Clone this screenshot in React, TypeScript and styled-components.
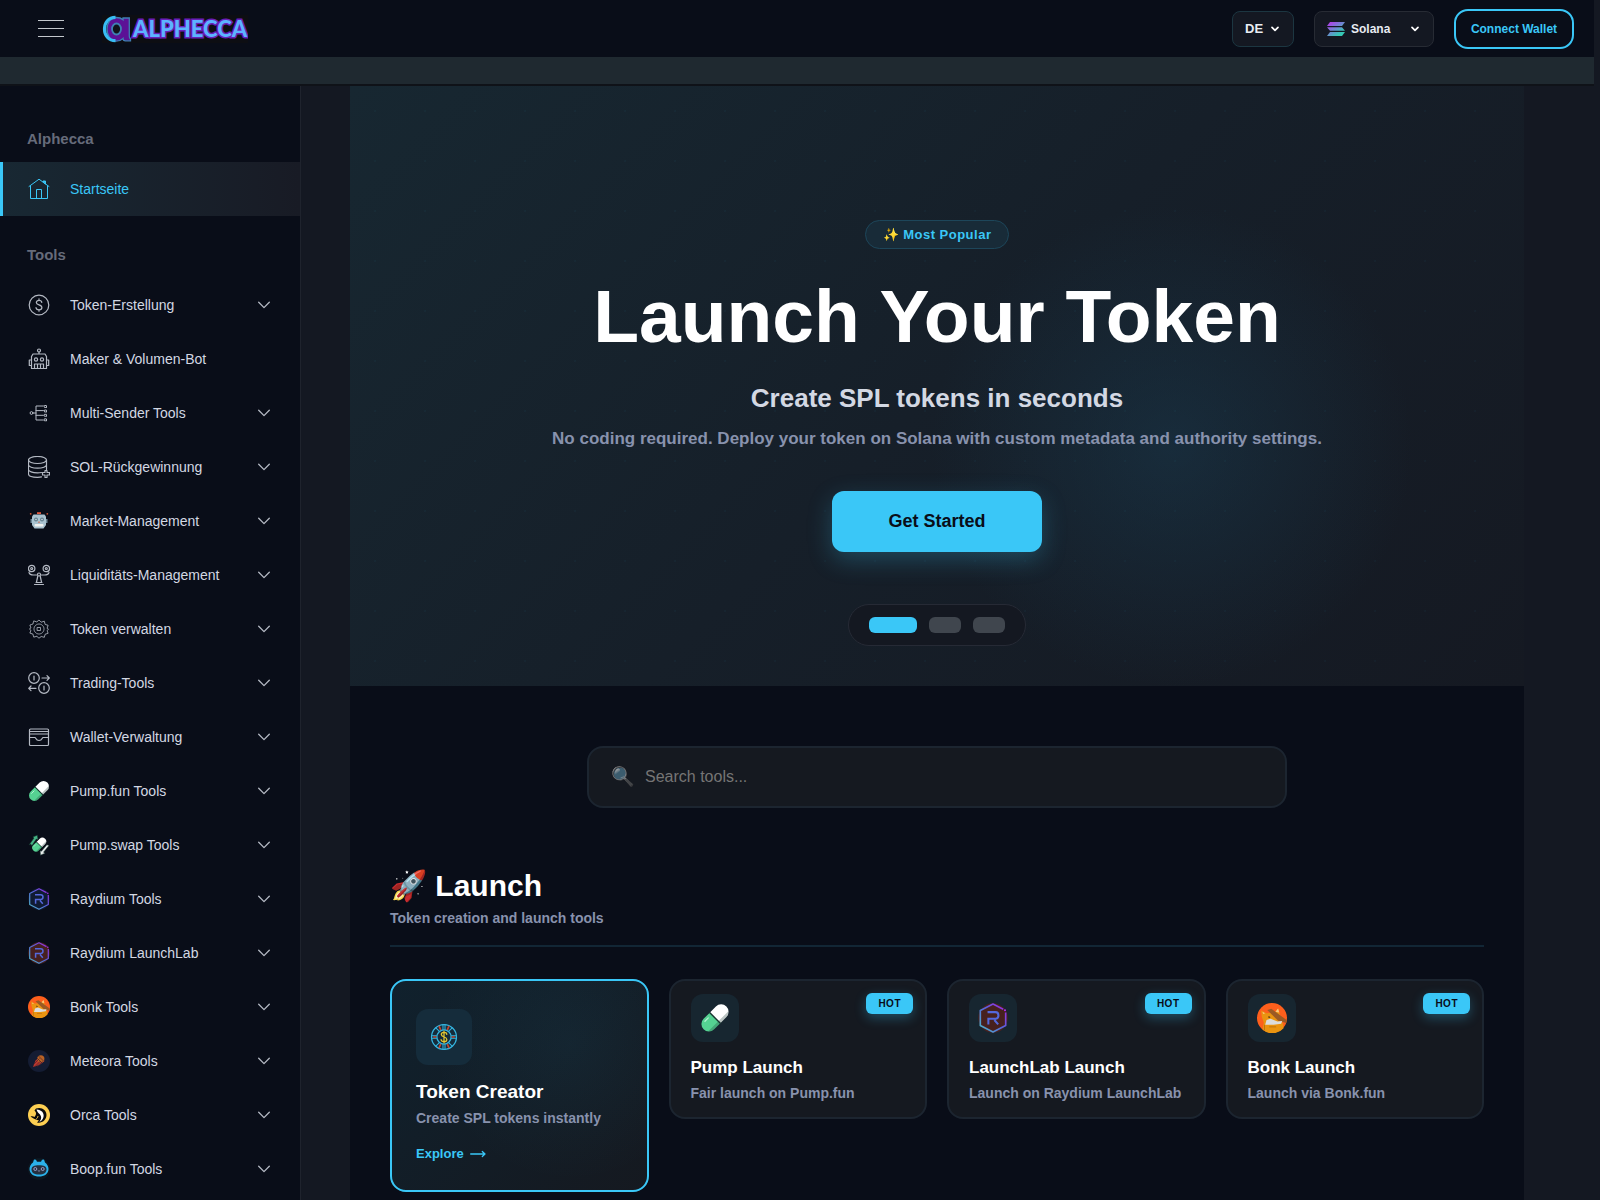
import React, { useId, useState } from "react";
import styled, { createGlobalStyle, css } from "styled-components";

const color = {
  accent: "#3ac7f7",
  ink: "#090d18",
  panel: "#141822",
  card: "#151920",
  line: "#1c2530",
  text: "#d3d8e3",
  muted: "#8892ad",
};

const GlobalStyle = createGlobalStyle`
  *, *::before, *::after { box-sizing: border-box; }
  body {
    margin: 0;
    background: ${color.panel};
    color: #fff;
    font-family: Arial, "Liberation Sans", sans-serif;
  }
  h1, h2, h3, p, ul { margin: 0; padding: 0; }
  ul { list-style: none; }
  button, input, select { font-family: inherit; }
`;

/* ---------- icons ---------- */

const LineSvg = styled.svg<{ $weight?: number }>`
  display: block;
  flex: none;
  fill: none;
  stroke: currentColor;
  stroke-width: ${(p) => p.$weight ?? 1.2};
  stroke-linecap: round;
  stroke-linejoin: round;
`;

const ArtSvg = styled.svg`
  display: block;
  flex: none;
`;

type IconProps = { size?: number };

const Line = ({ size = 22, weight, children }: IconProps & { weight?: number; children: React.ReactNode }) => (
  <LineSvg $weight={weight} width={size} height={size} viewBox="0 0 22 22" aria-hidden="true">
    {children}
  </LineSvg>
);

const Art = ({ size = 22, children }: IconProps & { children: React.ReactNode }) => (
  <ArtSvg width={size} height={size} viewBox="0 0 22 22" aria-hidden="true">
    {children}
  </ArtSvg>
);

const HomeIcon = () => (
  <Line weight={1}>
    <path d="M1 8.500 11 1.200l10 7.300M2.500 8v12.500h17V8M8.500 20.500v-9h5v9" />
    <path d="M15 3.800V3h2.500v2.700z" fill="currentColor" />
  </Line>
);

const DollarIcon = () => (
  <Line>
    <circle cx="11" cy="11" r="9.800" />
    <path d="M13.800 8.300c-.2-1.400-1.300-2-2.800-2s-2.700.8-2.700 2.200c0 3.200 5.600 1.600 5.600 5 0 1.500-1.200 2.300-2.900 2.300s-2.900-.8-3-2.300M11 4.800v1.500M11 15.800v1.400" />
  </Line>
);

const BotIcon = () => (
  <Line>
    <circle cx="11" cy="2.500" r="1.500" />
    <path d="M11 4v1.500M5 6h12l1.500 2.500v12h-15v-12zM3.500 12H1.300v5.500h2.200M18.500 12h2.200v5.500h-2.200M6.500 20.500V16h9v4.500M9.500 16v4.500M12.500 16v4.500" />
    <circle cx="8" cy="11.500" r="1.600" />
    <circle cx="14" cy="11.500" r="1.600" />
  </Line>
);

const MultiSendIcon = () => (
  <Line weight={1}>
    <circle cx="3.500" cy="11" r="1.400" />
    <path d="M5 11h3M15.500 4H8v14h7.500M8 8.600h7.500M8 13.300h7.500" />
    <path
      d="M16.500 3.500h2v2h-2zM16.500 8h2v2h-2zM16.500 12.300h2v2h-2zM16.500 16.800h2v2h-2z"
      strokeDasharray="1.500 1"
    />
  </Line>
);

const DatabaseIcon = () => (
  <Line>
    <ellipse cx="9.500" cy="4" rx="9" ry="3.500" />
    <path d="M.5 4v14c0 2 4 3.300 9 3.300 1.500 0 3-.1 4-.4M18.500 4v9.500M.5 8.700c0 2 4 3.500 9 3.500s9-1.500 9-3.500M.5 13.400c0 2 4 3.500 9 3.500 1.500 0 2.600-.1 4-.4" />
    <path d="M17 14.500h2v2h2.500v2.500H19v2.500h-2V19h-2.500v-2.500H17z" />
  </Line>
);

const RobotIcon = () => (
  <Art>
    <path d="M9 4V2.200h4V4z" fill="#e0563b" />
    <circle cx="2.700" cy="3.800" r=".9" fill="#c9522f" />
    <circle cx="19.300" cy="3.800" r=".9" fill="#c9522f" />
    <path d="M2.500 9h2v4h-2zM17.500 9h2v4h-2z" fill="#6d8796" />
    <path d="M5.500 4.500h11L18 6.500V15l-2.500 3.500h-9L4 15V6.500z" fill="#a9c2cf" />
    <circle cx="8" cy="9.500" r="2" fill="#617f8e" />
    <circle cx="14" cy="9.500" r="2" fill="#617f8e" />
    <circle cx="8" cy="9.500" r=".8" fill="#d4dde2" />
    <circle cx="14" cy="9.500" r=".8" fill="#d4dde2" />
    <path d="M10.500 11.500h1l.5 1.200h-2z" fill="#d06a52" />
    <rect x="6.500" y="14" width="9" height="2.500" rx="1" fill="#f1f1ef" />
  </Art>
);

const ScaleIcon = () => (
  <Line>
    <circle cx="3.700" cy="4.500" r="3.200" />
    <circle cx="18.300" cy="4.500" r="3.200" />
    <circle cx="3.700" cy="4.500" r="1" />
    <circle cx="18.300" cy="4.500" r="1" />
    <path d="M1 8.500c.5 1.800 2.500 2.500 4.500 2.500h3M21 8.500c-.5 1.800-2.500 2.500-4.500 2.500h-3M9.800 12 8.500 18M12.200 12l1.300 6M8 18.500h6M6.500 20.500h9" />
    <circle cx="11" cy="10.500" r="1.500" />
  </Line>
);

const GearIcon = () => (
  <Line weight={0.8}>
    <path
      d="m11 2 2.200 2.200 3.100-1 .8 3.200 3 .9-1 3 1.400 1-1.400 1.200 1 2.800-3 1-.8 3-3.100-.8L11 20.200l-2.200-1.900-3.100.8-.8-3-3-1 1-2.800L1.500 11l1.400-1-1-3 3-.9.8-3.200 3.100 1z"
      strokeDasharray="1.500 .6"
    />
    <circle cx="11" cy="11" r="5" strokeDasharray="1 .8" />
    <path d="M9.500 9.500h3v3h-3z" />
  </Line>
);

const SwapIcon = () => (
  <Line>
    <circle cx="6" cy="6" r="5.300" />
    <circle cx="16" cy="16" r="5.300" />
    <path d="M6 4v4M16 14v4M14 6h7.300M19 3.700 21.300 6 19 8.300M8 16.300H.7M3 14 .7 16.300 3 18.600" />
  </Line>
);

const WalletIcon = () => (
  <Line>
    <rect x="1.500" y="3" width="19" height="16.500" rx="1" />
    <path d="M1.500 5.500h19M1.500 8h19M1.500 11.500H7c.8 0 .8 3 4 3s3.200-3 4-3h5.500" />
  </Line>
);

const Capsule = () => (
  <g transform="rotate(45 11 11) translate(-1.800 -1.800) scale(1.160)">
    <path d="M6.300 11V5.500a4.700 4.700 0 0 1 9.400 0V11z" fill="#fff" />
    <path d="M6.300 11v5.500a4.700 4.700 0 0 0 9.400 0V11z" fill="#55d292" />
    <path d="M14 1.800c1.200 1 1.700 2.200 1.700 3.700V11H14zM14 11h1.700v5.500c0 1.500-.5 2.700-1.700 3.700z" fill="#1d4038" opacity=".3" />
    <path d="M6 11h10" stroke="#17352f" strokeWidth=".9" />
    <path d="M8 14v3" stroke="#b5f0d2" strokeWidth=".8" strokeLinecap="round" />
  </g>
);

const PillIcon = ({ size }: IconProps) => (
  <Art size={size}>
    <Capsule />
  </Art>
);

const PillSwapIcon = () => (
  <Art>
    <g transform="translate(3.500 3) scale(.7)">
      <Capsule />
    </g>
    <path d="M1 11 6 4 4.800 3l4.500-1.800.7 4.300L8.300 5 4 11.500 2.500 10z" fill="#44b383" stroke="#17352f" strokeWidth=".5" />
    <path d="m21 11.500-5.500 6.700 1.500 1-4.500 2-.4-4.400 1.300.5 5.500-6.500z" fill="#e8ecec" stroke="#17352f" strokeWidth=".5" />
  </Art>
);

const RaydiumIcon = ({ size, warm }: IconProps & { warm?: boolean }) => {
  const id = useId();
  return (
    <Art size={size}>
      <defs>
        <linearGradient id={id} x1="0" y1="1" x2="1" y2="0">
          <stop offset="0" stopColor="#4fb9c4" />
          <stop offset=".5" stopColor="#5468dc" />
          <stop offset="1" stopColor="#a31fe0" />
        </linearGradient>
      </defs>
      <circle cx="11" cy="11" r="10.800" fill={warm ? "#47201f" : "#101b33"} />
      <path
        d="M20.300 7v9.500L11 21.300 1.700 16.500v-11L11 .8l7.500 3.800"
        fill="none"
        stroke={`url(#${id})`}
        strokeWidth="1.200"
        strokeLinejoin="round"
      />
      <circle cx="19.800" cy="5.300" r=".8" fill="#b027ee" />
      <path
        d="M7 6.700h5.800c2.900 0 2.900 4.800 0 4.800H7.600v4.200M12 12.500l2.800 3.200"
        fill="none"
        stroke="#5468dc"
        strokeWidth="1.500"
      />
    </Art>
  );
};

const BonkIcon = ({ size }: IconProps) => (
  <Art size={size}>
    <circle cx="11" cy="11" r="11" fill="#fd5f1c" />
    <path d="M3.500 10 3 5.500l4 2 6-.5 2.500-3 1.300 4.500.7 4.500 1.500 2 .5 3.500A11 11 0 0 1 4 19.500l1-5z" fill="#ea9410" />
    <path d="m13.500 6.500 2-2.500.8 3zM4.500 8 4 6.500l2 1z" fill="#f9c982" />
    <path d="m7.500 5.200 3-1 11.200 8.300-.2 2.200-6-1.700z" fill="#9b5a24" />
    <path d="M7 12.500 10 11.500l5 2 3.500-.3-.8 2-5.500.8H6z" fill="#dcdcdc" />
    <path d="M8.500 9.500v1.500l1.500-.5z" fill="#3c2412" />
    <path d="M5.500 16v4M9 17.500h5" stroke="#b96a0b" strokeWidth=".6" />
  </Art>
);

const MeteoraIcon = () => (
  <Art>
    <circle cx="11" cy="11" r="11" fill="#141c33" />
    <path d="m5 17 2.500-6.500L13 6l3.500 5-5 4z" fill="#b8362e" />
    <circle cx="12.800" cy="8.800" r="3.600" fill="#b96224" />
    <path d="m5.500 14.500 6-6M6.500 17l6-6M9 16.500l5.500-5M10.500 6l5 5M9 8l5 5" stroke="#4e2228" strokeWidth=".7" />
  </Art>
);

const OrcaIcon = () => (
  <Art>
    <circle cx="11" cy="11" r="11" fill="#fdcf52" />
    <path d="M8 4.500c5.500-2 10.500 1.500 10.500 6.500s-4.500 8.500-9.500 7.500l2-2C7.500 15.500 4 14 2.500 12.500c1.500-.5 3-.3 4 .4C8 11 9 9 6.500 6.500z" fill="#0b0b0c" />
    <path d="M8.500 5.500c5 .3 8 3.500 7 7.500-.6 2.500-2.500 4.300-4.300 4.700C14 15 13.500 12 11.500 10 10 8.500 9 7.500 8.500 5.500z" fill="#fff" />
    <path d="M10 12c-.4 1.500-.6 2.300-1.800 3" fill="none" stroke="#fdcf52" strokeWidth=".9" />
  </Art>
);

const BoopIcon = () => (
  <Art>
    <circle cx="11" cy="11" r="11" fill="#0c1720" />
    <path d="M5 4.500 6 1.500l2 .3 1 2h4l1-2 2-.3 1 3c2.200 1.500 3.500 4 3.500 6.500 0 5-4.500 7.500-9.500 7.500S1.500 16 1.500 11c0-2.500 1.300-5 3.500-6.500z" fill="#2bb2ea" />
    <path d="M11 7.300c5 0 7.500 1.200 7.500 4.200S16 16.500 11 16.500s-7.500-2-7.500-5 2.500-4.200 7.500-4.200z" fill="#25313f" />
    <circle cx="7.300" cy="11" r="1.500" fill="none" stroke="#a5a8d6" strokeWidth=".9" />
    <circle cx="14.700" cy="11" r="1.500" fill="none" stroke="#a5a8d6" strokeWidth=".9" />
    <path d="M9.800 12.500c.8.700 1.600.7 2.400 0" fill="none" stroke="#a5a8d6" strokeWidth=".8" />
  </Art>
);

const ChipIcon = ({ size }: IconProps) => (
  <Line size={size} weight={1}>
    <g stroke="#35b5e0">
      <circle cx="11" cy="11" r="9.800" />
      <circle cx="11" cy="11" r="5.600" />
      <path
        d="M10.200 1.300v3.800M11.800 1.300v3.800M10.200 16.900v3.800M11.800 16.900v3.800M1.300 10h3.800M1.300 12h3.800M16.900 10h3.800M16.900 12h3.800M4.600 3.800l2.600 2.600M17.400 3.800l-2.600 2.600M4.600 18.200l2.600-2.600M17.400 18.200l-2.600-2.600"
        strokeWidth=".8"
      />
    </g>
    <path
      d="M7.300 2.800 8.200 5M14.700 2.800 13.800 5M7.300 19.200l.9-2.200M14.700 19.200l-.9-2.200M3 11h1.500M17.500 11H19"
      stroke="#c4452f"
      strokeWidth="1.300"
    />
    <path
      d="M13.200 8.900c-.1-1-1-1.500-2.200-1.500s-2.100.6-2.100 1.600c0 2.500 4.300 1.500 4.300 3.900 0 1.200-1 1.800-2.200 1.800s-2.200-.6-2.300-1.700M11 6.300v9.400"
      stroke="#e3c62f"
    />
  </Line>
);

const Chevron = () => (
  <LineSvg $weight={1.300} width={12} height={8} viewBox="0 0 12 8" aria-hidden="true">
    <path d="m.7 1.300 5.300 5.300 5.300-5.300" />
  </LineSvg>
);

const MoreArrow = () => (
  <LineSvg $weight={1.300} width={16} height={8} viewBox="0 0 16 8" aria-hidden="true">
    <path d="M.7 4h14.300M12.300 1.500 15 4l-2.700 2.500" />
  </LineSvg>
);

const SmallArrow = () => (
  <LineSvg $weight={1.700} width={8} height={6} viewBox="0 0 8 6" aria-hidden="true">
    <path d="m1 1.300 3 3 3-3" />
  </LineSvg>
);

const SolanaIcon = () => {
  const id = useId();
  return (
    <ArtSvg width={18} height={14} viewBox="0 0 18 14" aria-hidden="true">
      <defs>
        <linearGradient id={id} x1="0" y1="0" x2="10" y2="14" gradientUnits="userSpaceOnUse">
          <stop offset="0" stopColor="#c02df0" />
          <stop offset=".5" stopColor="#7a7ad6" />
          <stop offset="1" stopColor="#35c8b5" />
        </linearGradient>
      </defs>
      <path d="M3 0h15l-3 4H0zM0 5.200h15l3 3.600H3zM3 10h15l-3 4H0z" fill={`url(#${id})`} />
    </ArtSvg>
  );
};

const LogoText = styled.text`
  font-family: Lato, "Liberation Sans", sans-serif;
  font-size: 22px;
  font-weight: 900;
  fill: #5cb3ff;
  stroke: #6a1fb8;
  stroke-width: 3px;
  paint-order: stroke;
`;

const Logo = () => (
  <ArtSvg width={146} height={28} viewBox="0 0 146 28" role="img" aria-label="Alphecca">
    <rect width="146" height="28" fill="#0d0e13" />
    <path
      d="M21 3h6.300v17.500c0 2 .2 3 1.200 3v2.300h-5c-1.500 0-2.500-.8-2.500-2.300-1.800 1.700-4 2.700-7 2.700C8.500 26 5 20.500 5 14S9 2.500 14 2.500c3 0 5.500.8 7 2.300z"
      fill="#5c1196"
      stroke="#3f7fb4"
      strokeWidth="1.300"
    />
    <path d="M13.500 2.300C6.500 2.300 2.500 7.500 2.500 14s4 11.700 11 11.700" fill="none" stroke="#38bdf4" strokeWidth="3.200" />
    <ellipse cx="14.500" cy="14" rx="4.500" ry="5.500" fill="#11131a" stroke="#3f7fb4" strokeWidth="1.800" />
    <LogoText x="31" y="22">ALPHECCA</LogoText>
  </ArtSvg>
);

/* ---------- header ---------- */

const Shell = styled.div`
  display: flex;
  flex-direction: column;
  min-height: 100vh;
  margin-right: 6px;
`;

const TopBar = styled.header`
  display: flex;
  align-items: center;
  justify-content: space-between;
  height: 57px;
  padding: 0 20px 0 38px;
  background: ${color.ink};
`;

const Brand = styled.div`
  display: flex;
  align-items: center;
  gap: 38px;
`;

const MenuButton = styled.button`
  display: flex;
  flex-direction: column;
  justify-content: space-between;
  width: 26px;
  height: 17px;
  padding: 0;
  border: 0;
  background: none;
  cursor: pointer;
`;

const MenuStroke = styled.span`
  height: 1px;
  background: #c3c7cc;
`;

const Actions = styled.div`
  display: flex;
  align-items: center;
  gap: 20px;
`;

const Picker = styled.label<{ $tinted?: boolean }>`
  display: flex;
  align-items: center;
  gap: 6px;
  height: 36px;
  padding: 0 14px 0 12px;
  border: 1px solid ${(p) => (p.$tinted ? "#1c3641" : "#272b34")};
  border-radius: 8px;
  background: ${color.panel};
`;

const PickerSelect = styled.select<{ $width: number; $size: number }>`
  width: ${(p) => p.$width}px;
  padding: 0;
  border: 0;
  outline: 0;
  appearance: none;
  background: transparent;
  color: #e8ecf2;
  font-size: ${(p) => p.$size}px;
  font-weight: 700;
`;

const ConnectButton = styled.button`
  height: 40px;
  width: 120px;
  padding: 0;
  border: 2px solid ${color.accent};
  border-radius: 14px;
  background: ${color.ink};
  color: ${color.accent};
  font-size: 12px;
  font-weight: 700;
  cursor: pointer;
`;

const Ticker = styled.div`
  height: 29px;
  border-bottom: 2px solid #0f1218;
  background: #1f2930;
`;

/* ---------- sidebar ---------- */

const Body = styled.div`
  display: flex;
  flex: 1;
`;

const Sidebar = styled.nav`
  flex: none;
  width: 301px;
  padding: 40px 0 4px;
  border-right: 1px solid #1f232d;
  background: ${color.ink};
`;

const GroupTitle = styled.h3`
  margin: 0 27px 10px;
  color: #666b7a;
  font-size: 15px;
  line-height: 26px;
`;

const Group = styled.ul`
  margin-bottom: 26px;

  &:last-child {
    margin-bottom: 0;
  }
`;

const entryStyle = css<{ $active?: boolean }>`
  display: flex;
  align-items: center;
  gap: 20px;
  width: 100%;
  height: 54px;
  padding: 0 30px 0 25px;
  border: 0;
  border-left: 3px solid ${(p) => (p.$active ? color.accent : "transparent")};
  background: ${(p) => (p.$active ? "linear-gradient(90deg, #182833, #181b25)" : "none")};
  color: ${(p) => (p.$active ? color.accent : "#b4b9c3")};
  font-size: 14px;
  text-align: left;
  text-decoration: none;
  cursor: pointer;
`;

const EntryLink = styled.a<{ $active?: boolean }>`
  ${entryStyle}
`;

const EntryButton = styled.button<{ $active?: boolean }>`
  ${entryStyle}
`;

const EntryLabel = styled.span<{ $active?: boolean }>`
  flex: 1;
  color: ${(p) => (p.$active ? color.accent : color.text)};
`;

/* ---------- hero ---------- */

const Main = styled.main`
  display: flex;
  flex: 1;
  flex-direction: column;
  min-width: 0;
  margin: 0 70px 0 49px;
`;

const Hero = styled.section`
  display: flex;
  flex-direction: column;
  align-items: center;
  padding: 134px 40px 40px;
  background:
    radial-gradient(circle at center, rgba(58, 199, 247, 0.03) 1px, transparent 1px) 0 0 / 50px 50px,
    radial-gradient(circle 240px at 70% 60%, rgba(26, 62, 84, 0.45), transparent),
    linear-gradient(135deg, #172731 0%, #161f29 50%, #151922 100%);
  text-align: center;
`;

const HeroTag = styled.span`
  display: flex;
  align-items: center;
  height: 29px;
  padding: 0 17px;
  border: 1px solid #1d465a;
  border-radius: 15px;
  background: #182b38;
  color: ${color.accent};
  font-size: 13px;
  font-weight: 700;
  letter-spacing: 0.5px;
`;

const HeroTitle = styled.h1`
  margin-top: 24px;
  font-size: 75px;
  line-height: 86px;
`;

const HeroSubtitle = styled.h2`
  margin-top: 22px;
  color: ${color.text};
  font-size: 26px;
  line-height: 34px;
`;

const HeroText = styled.p`
  margin-top: 10px;
  color: ${color.muted};
  font-size: 17px;
  font-weight: 700;
  line-height: 28px;
`;

const HeroButton = styled.button`
  height: 61px;
  margin-top: 38px;
  padding: 0 56px 1px;
  border: 0;
  border-radius: 12px;
  background: ${color.accent};
  box-shadow: 0 8px 24px rgba(58, 199, 247, 0.25);
  color: ${color.ink};
  font-size: 18px;
  font-weight: 700;
  cursor: pointer;
`;

const Slides = styled.div`
  display: flex;
  gap: 12px;
  margin-top: 52px;
  padding: 12px 20px;
  border: 1px solid #262a35;
  border-radius: 21px;
  background: #141821;
`;

const SlideDot = styled.button<{ $active: boolean }>`
  width: ${(p) => (p.$active ? 48 : 32)}px;
  height: 16px;
  padding: 0;
  border: 0;
  border-radius: 6px;
  background: ${(p) => (p.$active ? color.accent : "#40464e")};
  cursor: pointer;
`;

/* ---------- catalog ---------- */

const Catalog = styled.section`
  flex: 1;
  padding: 60px 40px 0;
  background: ${color.ink};
`;

const SearchBox = styled.label`
  display: flex;
  align-items: center;
  gap: 8px;
  max-width: 700px;
  height: 62px;
  margin: 0 auto;
  padding: 0 22px;
  border: 2px solid ${color.line};
  border-radius: 16px;
  background: ${color.card};
`;

const SearchGlyph = styled.span`
  flex: none;
  width: 26px;
  font-size: 19px;
  line-height: 26px;
  opacity: 0.6;
`;

const SearchInput = styled.input`
  flex: 1;
  min-width: 0;
  padding: 0;
  border: 0;
  outline: 0;
  background: transparent;
  color: #fff;
  font-size: 16px;

  &::placeholder {
    color: #757575;
  }
`;

const SectionHead = styled.div`
  margin: 60px 0 32px;
  padding-bottom: 17px;
  border-bottom: 2px solid #122635;
`;

const SectionTitle = styled.h2`
  font-size: 30px;
  line-height: 36px;
`;

const SectionNote = styled.p`
  margin-top: 4px;
  color: ${color.muted};
  font-size: 14px;
  font-weight: 700;
  line-height: 20px;
`;

const CardGrid = styled.div`
  display: grid;
  grid-template-columns: repeat(4, minmax(0, 1fr));
  align-items: start;
  gap: 20px;
`;

const Card = styled.a<{ $featured?: boolean }>`
  position: relative;
  display: block;
  padding: ${(p) => (p.$featured ? "28px 24px" : "13px 20px")};
  border: 2px solid ${(p) => (p.$featured ? color.accent : color.line)};
  border-radius: 16px;
  background: ${(p) =>
    p.$featured
      ? "radial-gradient(circle at 70% 30%, rgba(58, 199, 247, 0.05), transparent 60%), linear-gradient(135deg, #10212d, #151920)"
      : color.card};
  text-decoration: none;
`;

const CardIcon = styled.span<{ $featured?: boolean }>`
  display: grid;
  place-items: center;
  width: ${(p) => (p.$featured ? 56 : 48)}px;
  height: ${(p) => (p.$featured ? 56 : 48)}px;
  border-radius: 12px;
  background: ${(p) => (p.$featured ? "#152c3b" : "#172630")};
`;

const CardTitle = styled.h3<{ $featured?: boolean }>`
  margin-top: ${(p) => (p.$featured ? 16 : 14)}px;
  color: #fff;
  font-size: ${(p) => (p.$featured ? 19 : 17)}px;
  line-height: ${(p) => (p.$featured ? 22 : 24)}px;
`;

const CardText = styled.p<{ $featured?: boolean }>`
  margin-top: ${(p) => (p.$featured ? 4 : 2)}px;
  color: ${color.muted};
  font-size: 14px;
  font-weight: 700;
  line-height: 22px;
`;

const CardMore = styled.span`
  display: flex;
  align-items: center;
  gap: 6px;
  margin-top: 16px;
  color: ${color.accent};
  font-size: 13px;
  font-weight: 700;
  line-height: 17px;
`;

const HotTag = styled.span`
  position: absolute;
  top: 12px;
  right: 12px;
  padding: 0 12px;
  border-radius: 6px;
  background: ${color.accent};
  box-shadow: 0 4px 12px rgba(58, 199, 247, 0.3);
  color: ${color.ink};
  font-size: 10px;
  font-weight: 700;
  letter-spacing: 0.5px;
  line-height: 21px;
`;

const toolEntries = [
  { label: "Token-Erstellung", icon: <DollarIcon /> },
  { label: "Maker & Volumen-Bot", icon: <BotIcon />, single: true },
  { label: "Multi-Sender Tools", icon: <MultiSendIcon /> },
  { label: "SOL-Rückgewinnung", icon: <DatabaseIcon /> },
  { label: "Market-Management", icon: <RobotIcon /> },
  { label: "Liquiditäts-Management", icon: <ScaleIcon /> },
  { label: "Token verwalten", icon: <GearIcon /> },
  { label: "Trading-Tools", icon: <SwapIcon /> },
  { label: "Wallet-Verwaltung", icon: <WalletIcon /> },
  { label: "Pump.fun Tools", icon: <PillIcon /> },
  { label: "Pump.swap Tools", icon: <PillSwapIcon /> },
  { label: "Raydium Tools", icon: <RaydiumIcon /> },
  { label: "Raydium LaunchLab", icon: <RaydiumIcon warm /> },
  { label: "Bonk Tools", icon: <BonkIcon /> },
  { label: "Meteora Tools", icon: <MeteoraIcon /> },
  { label: "Orca Tools", icon: <OrcaIcon /> },
  { label: "Boop.fun Tools", icon: <BoopIcon /> },
];

const cards = [
  { title: "Token Creator", text: "Create SPL tokens instantly", icon: <ChipIcon size={28} />, featured: true },
  { title: "Pump Launch", text: "Fair launch on Pump.fun", icon: <PillIcon size={30} /> },
  { title: "LaunchLab Launch", text: "Launch on Raydium LaunchLab", icon: <RaydiumIcon size={30} warm /> },
  { title: "Bonk Launch", text: "Launch via Bonk.fun", icon: <BonkIcon size={30} /> },
];

export default function App() {
  const [slide, setSlide] = useState(0);
  return (
    <>
      <GlobalStyle />
      <Shell>
        <TopBar>
          <Brand>
            <MenuButton type="button" aria-label="Menu">
              <MenuStroke />
              <MenuStroke />
              <MenuStroke />
            </MenuButton>
            <Logo />
          </Brand>
          <Actions>
            <Picker $tinted>
              <PickerSelect $width={20} $size={13} aria-label="Language" defaultValue="DE">
                <option>DE</option>
              </PickerSelect>
              <SmallArrow />
            </Picker>
            <Picker>
              <SolanaIcon />
              <PickerSelect $width={54} $size={12} aria-label="Network" defaultValue="Solana">
                <option>Solana</option>
              </PickerSelect>
              <SmallArrow />
            </Picker>
            <ConnectButton type="button">Connect Wallet</ConnectButton>
          </Actions>
        </TopBar>
        <Ticker />
        <Body>
          <Sidebar>
            <GroupTitle>Alphecca</GroupTitle>
            <Group>
              <li>
                <EntryLink href="#" $active>
                  <HomeIcon />
                  <EntryLabel $active>Startseite</EntryLabel>
                </EntryLink>
              </li>
            </Group>
            <GroupTitle>Tools</GroupTitle>
            <Group>
              {toolEntries.map((entry) => (
                <li key={entry.label}>
                  {entry.single ? (
                    <EntryLink href="#">
                      {entry.icon}
                      <EntryLabel>{entry.label}</EntryLabel>
                    </EntryLink>
                  ) : (
                    <EntryButton type="button" aria-expanded={false}>
                      {entry.icon}
                      <EntryLabel>{entry.label}</EntryLabel>
                      <Chevron />
                    </EntryButton>
                  )}
                </li>
              ))}
            </Group>
          </Sidebar>
          <Main>
            <Hero>
              <HeroTag>✨ Most Popular</HeroTag>
              <HeroTitle>Launch Your Token</HeroTitle>
              <HeroSubtitle>Create SPL tokens in seconds</HeroSubtitle>
              <HeroText>
                No coding required. Deploy your token on Solana with custom metadata and authority settings.
              </HeroText>
              <HeroButton type="button">Get Started</HeroButton>
              <Slides>
                {[0, 1, 2].map((i) => (
                  <SlideDot
                    key={i}
                    type="button"
                    aria-label={`Slide ${i + 1}`}
                    $active={i === slide}
                    onClick={() => setSlide(i)}
                  />
                ))}
              </Slides>
            </Hero>
            <Catalog>
              <SearchBox>
                <SearchGlyph>🔍</SearchGlyph>
                <SearchInput type="text" placeholder="Search tools..." aria-label="Search tools" />
              </SearchBox>
              <SectionHead>
                <SectionTitle>🚀 Launch</SectionTitle>
                <SectionNote>Token creation and launch tools</SectionNote>
              </SectionHead>
              <CardGrid>
                {cards.map((card) => (
                  <Card key={card.title} href="#" $featured={card.featured}>
                    {!card.featured && <HotTag>HOT</HotTag>}
                    <CardIcon $featured={card.featured}>{card.icon}</CardIcon>
                    <CardTitle $featured={card.featured}>{card.title}</CardTitle>
                    <CardText $featured={card.featured}>{card.text}</CardText>
                    {card.featured && (
                      <CardMore>
                        Explore <MoreArrow />
                      </CardMore>
                    )}
                  </Card>
                ))}
              </CardGrid>
            </Catalog>
          </Main>
        </Body>
      </Shell>
    </>
  );
}
